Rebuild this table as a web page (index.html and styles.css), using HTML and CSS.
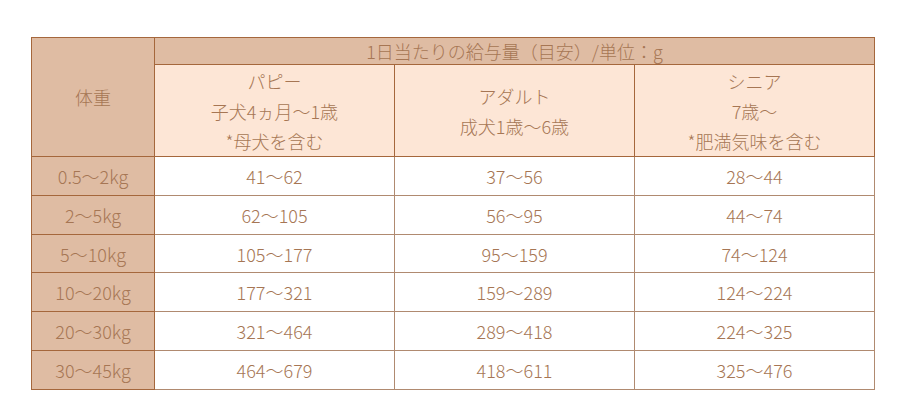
FILE: index.html
```html
<!DOCTYPE html>
<html lang="ja">
<head>
<meta charset="utf-8">
<title>給与量</title>
<link rel="stylesheet" href="styles.css">
</head>
<body>
<div class="wrap">
<table class="feed">
  <colgroup>
    <col class="c-weight">
    <col class="c-age">
    <col class="c-age">
    <col class="c-age">
  </colgroup>
  <thead>
    <tr class="r-top">
      <th class="h-weight" rowspan="2">体重</th>
      <th class="h-title" colspan="3">1日当たりの給与量（目安）/単位：g</th>
    </tr>
    <tr class="r-sub">
      <th class="h-age">パピー<br>子犬4ヵ月〜1歳<br>*母犬を含む</th>
      <th class="h-age">アダルト<br>成犬1歳〜6歳</th>
      <th class="h-age">シニア<br>7歳〜<br>*肥満気味を含む</th>
    </tr>
  </thead>
  <tbody>
    <tr class="r-data"><th class="w">0.5〜2kg</th><td>41〜62</td><td>37〜56</td><td>28〜44</td></tr>
    <tr class="r-data"><th class="w">2〜5kg</th><td>62〜105</td><td>56〜95</td><td>44〜74</td></tr>
    <tr class="r-data r-short"><th class="w">5〜10kg</th><td>105〜177</td><td>95〜159</td><td>74〜124</td></tr>
    <tr class="r-data"><th class="w">10〜20kg</th><td>177〜321</td><td>159〜289</td><td>124〜224</td></tr>
    <tr class="r-data"><th class="w">20〜30kg</th><td>321〜464</td><td>289〜418</td><td>224〜325</td></tr>
    <tr class="r-data"><th class="w">30〜45kg</th><td>464〜679</td><td>418〜611</td><td>325〜476</td></tr>
  </tbody>
</table>
</div>
</body>
</html>
```

FILE: styles.css
```css
html, body {
  margin: 0;
  padding: 0;
  background: #ffffff;
}

.wrap {
  padding: 37px 0 0 31px;
}

.feed {
  border-collapse: collapse;
  table-layout: fixed;
  width: 843px;
  font-family: "Noto Sans CJK JP", "Noto Sans", sans-serif;
  font-size: 18px;
  font-weight: 300;
  color: #a67654;
}

.c-weight { width: 123px; }
.c-age { width: 240px; }

.feed th,
.feed td {
  border: 1px solid #a5673c;
  padding: 0;
  text-align: center;
  vertical-align: middle;
  font-weight: 300;
  line-height: 24px;
}

.feed .h-weight,
.feed .h-title,
.feed .w {
  background: #dfbca3;
}

.feed .h-age {
  background: #fde6d6;
  line-height: 30px;
  padding: 1px 0 0;
}

.feed td {
  background: #ffffff;
  border-color: #b08a70;
}

.r-top { height: 27px; }
.r-sub { height: 92px; }
.r-data { height: 39px; }
.r-data.r-short { height: 38px; }
```
